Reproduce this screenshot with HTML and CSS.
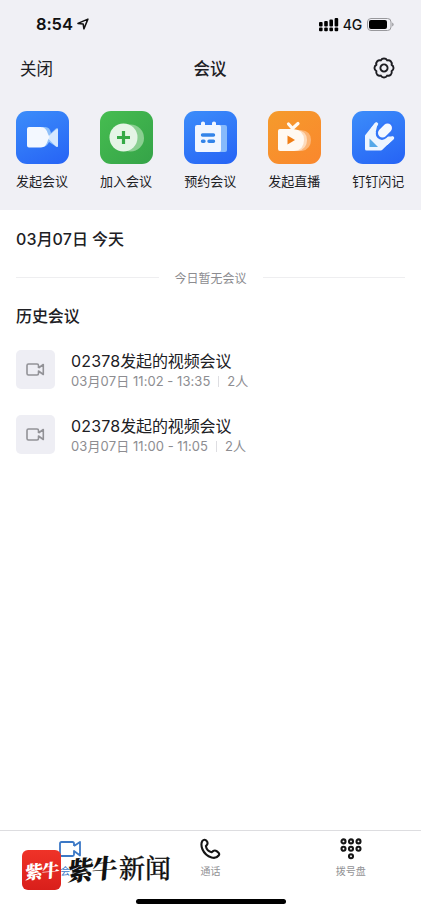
FILE: index.html
```html
<!DOCTYPE html>
<html lang="zh-CN">
<head>
<meta charset="utf-8">
<title>会议</title>
<link rel="stylesheet" href="styles.css">
</head>
<body>
<div class="app">
  <header class="header">
    <div class="status">
      <div class="clock">8:54
        <svg width="12" height="12" viewBox="0 0 12 12"><path d="M.9 5.400 10.900 1.100 6.900 10.900 6.200 6.100Z" fill="none" stroke="#111" stroke-width="1.500" stroke-linejoin="round"/></svg>
      </div>
      <div class="signals">
        <svg width="20" height="15" viewBox="0 0 20 15" fill="#000"><rect x="0" y="5" width="3.6" height="4.4" rx="1"/><rect x="5.2" y="4" width="3.6" height="5.4" rx="1"/><rect x="10.4" y="2.5" width="3.6" height="6.9" rx="1"/><rect x="15.6" y="1" width="3.6" height="8.4" rx="1"/><rect x="0" y="10.6" width="3.6" height="3.6" rx="1"/><rect x="5.2" y="10.6" width="3.6" height="3.6" rx="1"/><rect x="10.4" y="10.6" width="3.6" height="3.6" rx="1"/><rect x="15.6" y="10.6" width="3.6" height="3.6" rx="1"/></svg>
        <span class="network">4G</span>
        <svg width="27" height="13" viewBox="0 0 27 13"><rect x=".5" y=".5" width="23.5" height="12" rx="3.5" fill="none" stroke="#98989c"/><rect x="2" y="2" width="18" height="9" rx="2" fill="#000"/><path d="M25.2 4.4q1.4.5 1.4 2.1t-1.4 2.1z" fill="#98989c"/></svg>
      </div>
    </div>
    <nav class="nav">
      <span class="close">关闭</span>
      <h1 class="title">会议</h1>
      <svg class="gear" width="22" height="22" viewBox="-11 -11 22 22" fill="none" stroke="#1d1d22" stroke-width="1.900" stroke-linejoin="round"><path d="M7.580-3.140A3.500 3.500 0 0 1 7.580 3.140A3.500 3.500 0 0 1 3.140 7.580A3.500 3.500 0 0 1-3.140 7.580A3.500 3.500 0 0 1-7.580 3.140A3.500 3.500 0 0 1-7.580-3.140A3.500 3.500 0 0 1-3.140-7.580A3.500 3.500 0 0 1 3.140-7.580A3.500 3.500 0 0 1 7.580-3.140Z"/><circle r="3.600"/></svg>
    </nav>
    <div class="actions">
      <div class="action">
        <svg class="tile blue" viewBox="0 0 53 53"><path d="M26 16h3q5 0 6 6l5-4.500q2-1.300 2 1v16q0 2.300-2 1L33 31q-2 5-7 5z" fill="#8fc0fa"/><path d="M31 26.500 40 18.500q2-1.300 2 .8V34.500q0 2.300-2 1z" fill="#d5e8ff"/><path d="M13 16h12q5 0 7 7l1.500 3-1.500 3q-2 7.500-7 7.500H13q-2 0-2-2V18q0-2 2-2z" fill="#f3f8ff"/></svg>
        <span>发起会议</span>
      </div>
      <div class="action">
        <svg class="tile green" viewBox="0 0 53 53"><circle cx="30.5" cy="27" r="13.500" fill="#8acf91"/><circle cx="23.5" cy="26.500" r="14" fill="#e5f5e6"/><path d="M23.500 20v13M17 26.500h13" stroke="#36a946" stroke-width="3.200"/></svg>
        <span>加入会议</span>
      </div>
      <div class="action">
        <svg class="tile blue" viewBox="0 0 53 53"><rect x="23" y="14" width="20" height="27" rx="2" fill="#87bafb"/><path d="M13 14h4v-2q0-1.500 2-1.500t2 1.500v2h7v-2q0-1.500 2-1.500t2 1.500v2h3q2 0 2 2v23q0 2-2 2H13q-2 0-2-2V16q0-2 2-2z" fill="#f1f6ff"/><g stroke="#3384e9" stroke-width="3.400" stroke-linecap="round"><path d="M18.500 24h11M18.500 30.300h1.500M25 30.300h4.500"/></g></svg>
        <span>预约会议</span>
      </div>
      <div class="action">
        <svg class="tile orange" viewBox="0 0 53 53"><path d="M28 19h5q10 1 10 10t-9 11h-8z" fill="#fbb577"/><path d="M25 19h4q10 1 10 10t-9 11h-8z" fill="#fddbbc"/><path d="M12 18h13q11 1 11 11T26 40H12q-2 0-2-2V20q0-2 2-2z" fill="#fff9f2"/><path d="M20.500 13 24.500 17.500 30 12.500" fill="none" stroke="#fff9f2" stroke-width="3.200" stroke-linecap="round" stroke-linejoin="round"/><path d="M19.500 24.500v9L27 29z" fill="#f17f16"/></svg>
        <span>发起直播</span>
      </div>
      <div class="action">
        <svg class="tile blue" viewBox="0 0 53 53"><path d="M24 13 14.500 25v13H29L40.500 27 33 27 22 22Z" fill="#edf5ff" stroke="#edf5ff" stroke-width="3" stroke-linejoin="round"/><path d="M30 22.700 36 16.700" stroke="#3376f9" stroke-width="12.500" stroke-linecap="round"/><path d="M24.500 13 21 17.500M40.500 27 35 32" stroke="#edf5ff" stroke-width="3.400" stroke-linecap="round"/><path d="M30.500 22 35.500 17" stroke="#f5f9ff" stroke-width="9" stroke-linecap="round"/><path d="M17.500 27.500v8.500H26z" fill="#55a8e8"/></svg>
        <span>钉钉闪记</span>
      </div>
    </div>
  </header>

  <main class="content">
    <h2 class="today"><span class="lat">03</span>月<span class="lat">07</span>日 今天</h2>
    <div class="empty"><span>今日暂无会议</span></div>
    <h2 class="history">历史会议</h2>
    <div class="meeting">
      <div class="thumb"><svg width="19" height="14" viewBox="0 0 19 14" fill="none" stroke="#929297" stroke-width="1.600" stroke-linejoin="round"><path d="M12.500 5V2.500q0-1.500-1.500-1.500H2.500Q1 1 1 2.500v8Q1 12 2.500 12H11q1.500 0 1.500-1.500V8L17.300 11.500V1.500L12.500 5"/></svg></div>
      <div class="info">
        <div class="name"><span class="lat">02378</span>发起的视频会议</div>
        <div class="meta"><span><span class="lat">03</span>月<span class="lat">07</span>日 11:02 - 13:35</span><i></i><span>2人</span></div>
      </div>
    </div>
    <div class="meeting">
      <div class="thumb"><svg width="19" height="14" viewBox="0 0 19 14" fill="none" stroke="#929297" stroke-width="1.600" stroke-linejoin="round"><path d="M12.500 5V2.500q0-1.500-1.500-1.500H2.500Q1 1 1 2.500v8Q1 12 2.500 12H11q1.500 0 1.500-1.500V8L17.300 11.500V1.500L12.500 5"/></svg></div>
      <div class="info">
        <div class="name"><span class="lat">02378</span>发起的视频会议</div>
        <div class="meta"><span><span class="lat">03</span>月<span class="lat">07</span>日 11:00 - 11:05</span><i></i><span>2人</span></div>
      </div>
    </div>
  </main>

  <footer class="tabs">
    <div class="tab active">
      <svg width="24" height="22" viewBox="0 0 24 22" fill="none" stroke="#3b78c6" stroke-width="1.800" stroke-linejoin="round"><path d="M16 8V5.500Q16 4 14.500 4h-11Q2 4 2 5.500v11Q2 18 3.500 18h11q1.500 0 1.500-1.500V13l6 4.500V4L16 8"/></svg>
      <span>会议</span>
    </div>
    <div class="tab">
      <svg width="22" height="22" viewBox="0 0 22 22" fill="none" stroke="#151515" stroke-width="2.100" stroke-linejoin="round"><path d="M3.200 3.200Q5 .9 7 2.300q2.200 2 1.300 4-.4.900-1.400 1.800c.5 3 3 5.500 5.800 6.200l1.700-1.400q1.600-1 3.600.5l1.800 1.600q.900 1.300-.2 2.500-2.500 3.300-7 2-6.500-2-9.300-8.500-1.700-4.700-.1-7.800z"/></svg>
      <span>通话</span>
    </div>
    <div class="tab">
      <svg width="22" height="22" viewBox="0 0 22 22" fill="none" stroke="#151515" stroke-width="2.100"><circle cx="3.500" cy="3.400" r="2"/><circle cx="11" cy="3.400" r="2"/><circle cx="18.500" cy="3.400" r="2"/><circle cx="3.500" cy="10.800" r="2"/><circle cx="11" cy="10.800" r="2"/><circle cx="18.500" cy="10.800" r="2"/><circle cx="11" cy="18.200" r="2"/></svg>
      <span>拨号盘</span>
    </div>
    <div class="home-bar"></div>
    <div class="watermark">
      <div class="seal"><span>紫牛</span></div>
      <span class="brush">紫牛</span>
      <span class="news">新闻</span>
    </div>
  </footer>
</div>
</body>
</html>
```
FILE: styles.css
```css
* { box-sizing: border-box; }
body { margin: 0; background: #fff; font-family: Inter, "Noto Sans CJK SC", sans-serif; color: #202024; }
h1, h2 { margin: 0; }
svg { display: block; flex: none; }
.app { width: 421px; height: 912px; display: flex; flex-direction: column; overflow: hidden; }

.header { height: 210px; flex: none; background: #f0f0f5; }
.status { height: 48px; padding: 0 27px 0 36px; display: flex; align-items: center; justify-content: space-between; }
.clock { display: flex; align-items: center; gap: 4px; font-size: 16.5px; font-weight: 600; color: #111; letter-spacing: -.1px; }
.signals { display: flex; align-items: center; }
.network { font-size: 14px; font-weight: 500; margin: 0 5px 0 4px; letter-spacing: -.2px; color: #111; }
.nav { height: 40px; padding: 0 26px 0 20px; display: grid; grid-template-columns: 1fr auto 1fr; align-items: center; }
.close { font-size: 16.5px; }
.title { font-size: 16.5px; font-weight: 500; margin-left: 5px; }
.gear { justify-self: end; }
.actions { padding: 23px 8px 0; display: grid; grid-template-columns: repeat(5, 68px); column-gap: 16.1px; }
.action { display: flex; flex-direction: column; align-items: center; font-size: 13px; line-height: 20px; white-space: nowrap; }
.action span { margin-top: 7px; }
.tile { width: 53px; height: 53px; border-radius: 11px; }
.blue { background: linear-gradient(155deg, #3c8dfa, #2663f5); }
.green { background: linear-gradient(135deg, #46bd50, #35a348); }
.orange { background: linear-gradient(145deg, #f59b2c, #fa872d); }

.content { flex: 1; padding: 17px 16px 0; }
.today, .history { font-size: 16px; line-height: 24px; font-weight: 500; letter-spacing: -.1px; }
.lat { letter-spacing: .15px; }
.empty { display: flex; align-items: center; gap: 16px; height: 20px; margin-top: 16px; font-size: 12px; color: #8c8c90; }
.empty::before, .empty::after { content: ""; flex: 1; height: 1px; background: #eeeef0; }
.history { margin-top: 17px; }
.meeting { height: 39px; margin-top: 22px; display: flex; gap: 16px; }
.meeting + .meeting { margin-top: 26px; }
.thumb { width: 39px; height: 39px; border-radius: 5px; background: #eeeef4; display: grid; place-items: center; }
.info { white-space: nowrap; }
.name { font-size: 16px; line-height: 22px; letter-spacing: -.12px; }
.meta { font-size: 13px; line-height: 18px; color: #8d8d91; display: flex; align-items: center; letter-spacing: .05px; }
.meta i { width: 1px; height: 11px; margin: 0 8px; background: #dedee2; }

.tabs { height: 82px; flex: none; position: relative; border-top: 1px solid #dddde0; display: grid; grid-template-columns: repeat(3, 1fr); }
.tab { display: flex; flex-direction: column; align-items: center; padding-top: 7px; font-size: 10px; line-height: 16px; color: #929295; }
.tab span { margin-top: 3px; }
.active { color: #3b78c6; }
.home-bar { position: absolute; left: 136px; top: 68px; width: 150px; height: 5px; border-radius: 3px; background: #000; }
.watermark { position: absolute; left: 22px; top: 19px; height: 40px; display: flex; align-items: center; white-space: nowrap; color: #111; }
.seal { width: 39px; height: 40px; border-radius: 6px; background: linear-gradient(#ef3328, #d91f1b); color: #fff; display: grid; place-items: center; font-size: 18px; font-weight: 900; line-height: 40px; }
.seal span { font-family: "Noto Serif CJK SC", "Noto Sans CJK SC", serif; transform: rotate(-5deg) skewX(-8deg); letter-spacing: -1px; }
.brush { margin-left: 7px; font-family: "Noto Serif CJK SC", "Noto Sans CJK SC", serif; font-size: 26px; line-height: 40px; font-weight: 900; letter-spacing: -2px; transform: translateY(-2px) rotate(-5deg) skewX(-10deg); }
.news { margin-left: 3px; margin-top: -6px; font-family: "Noto Serif CJK SC", "Noto Sans CJK SC", serif; font-size: 26px; line-height: 40px; font-weight: 500; -webkit-text-stroke: .3px #111; }
```
